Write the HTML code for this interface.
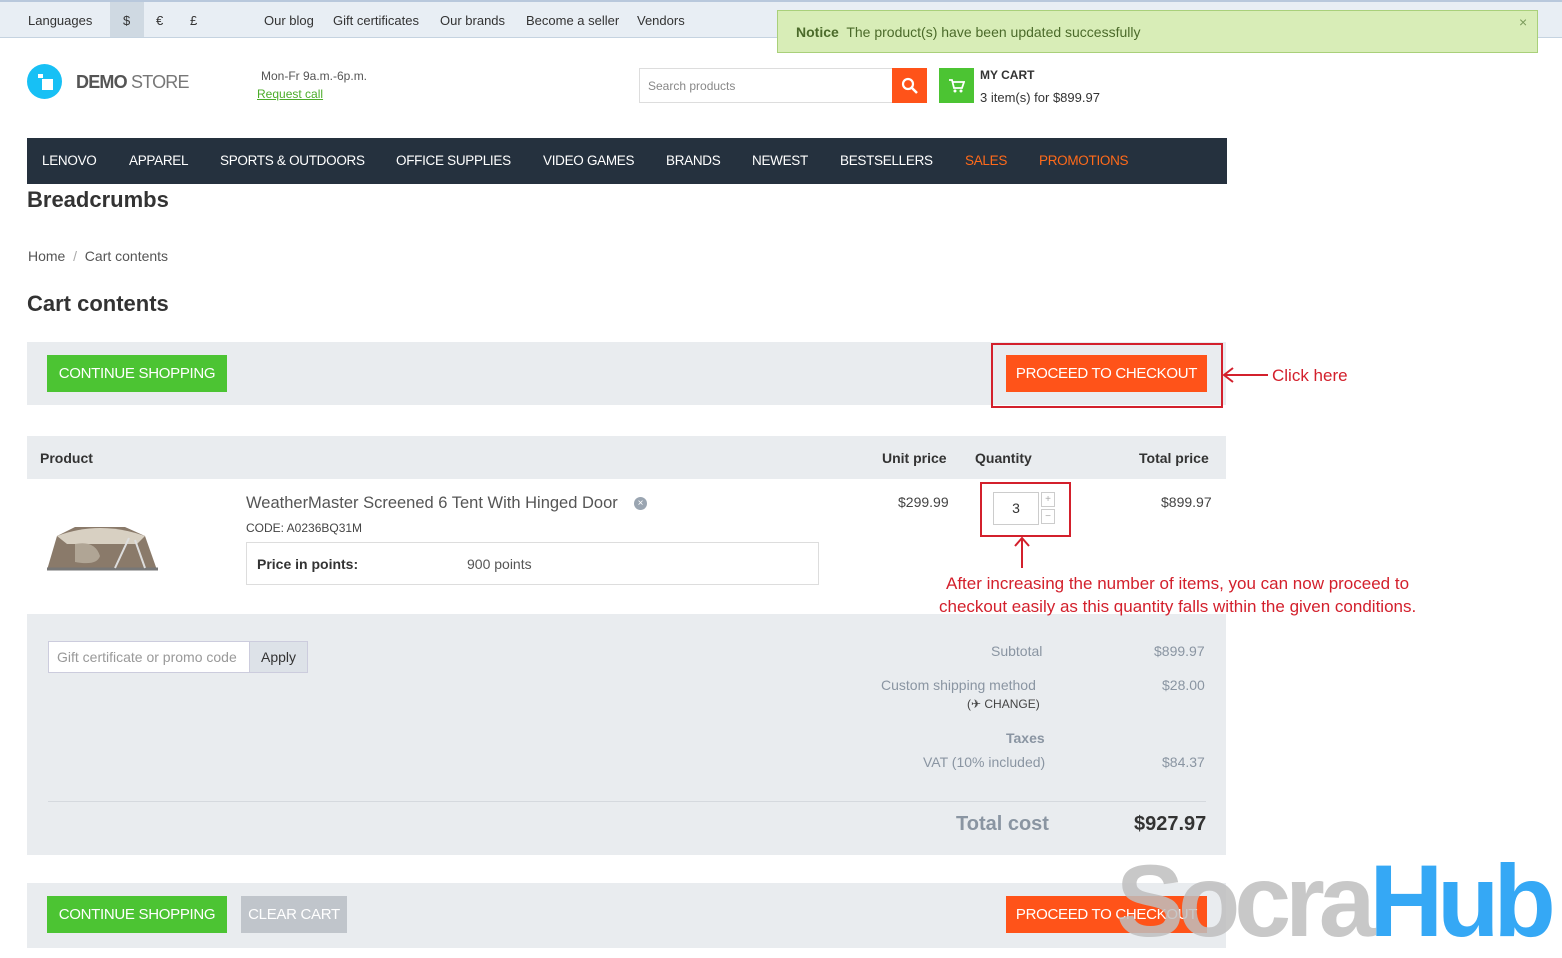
<!DOCTYPE html>
<html><head><meta charset="utf-8"><style>
*{margin:0;padding:0;box-sizing:border-box}
body{width:1562px;height:948px;position:relative;overflow:hidden;background:#fff;font-family:"Liberation Sans",sans-serif;color:#333}
.a{position:absolute;white-space:nowrap}
.top{left:0;top:0;width:1562px;height:38px;background:#e8eef4;border-top:2px solid #b8c8dc;border-bottom:1px solid #c5d3e0}
.t{font-size:13px;color:#333;top:13px}
.nav{left:27px;top:138px;width:1200px;height:46px;background:#25313e}
.nav span{position:absolute;top:15px;color:#fff;font-size:13.5px;letter-spacing:-0.3px}
.btn{position:absolute;color:#fff;font-size:15px;text-align:center;line-height:37px;height:37px;letter-spacing:-0.3px}
.g{background:#4cc433}.o{background:#ff5319}
.gray{color:#8a95a2}
</style></head><body>
<div class="a top"></div>
<div class="a" style="left:110px;top:2px;width:34px;height:35px;background:#cfd9e2"></div>
<div class="a t" style="left:28px">Languages</div>
<div class="a t" style="left:123px">$</div>
<div class="a t" style="left:156px">€</div>
<div class="a t" style="left:190px">£</div>
<div class="a t" style="left:264px">Our blog</div>
<div class="a t" style="left:333px">Gift certificates</div>
<div class="a t" style="left:440px">Our brands</div>
<div class="a t" style="left:526px">Become a seller</div>
<div class="a t" style="left:637px">Vendors</div>
<div class="a" style="left:777px;top:10px;width:761px;height:43px;background:#d8edb7;border:1px solid #a9d07a"></div>
<div class="a" style="left:796px;top:24px;font-size:14px;color:#4b6a2a"><b>Notice</b>&nbsp; The product(s) have been updated successfully</div>
<div class="a" style="left:1519px;top:14px;font-size:14px;color:#7a9a5a">×</div>

<div class="a" style="left:27px;top:64px;width:35px;height:35px;border-radius:50%;background:#17c0f5"></div>
<div class="a" style="left:38px;top:74px;width:5px;height:4px;background:#fff"></div>
<div class="a" style="left:42px;top:79px;width:11px;height:11px;background:#fff"></div>
<div class="a" style="left:76px;top:72px;font-size:18px;color:#555;letter-spacing:-0.8px"><b>DEMO</b> <span style="color:#777">STORE</span></div>
<div class="a" style="left:261px;top:69px;font-size:12px;color:#555">Mon-Fr 9a.m.-6p.m.</div>
<div class="a" style="left:257px;top:87px;font-size:12px;color:#4cac2a;text-decoration:underline">Request call</div>
<div class="a" style="left:639px;top:68px;width:254px;height:35px;border:1px solid #ddd"></div>
<div class="a" style="left:648px;top:79px;font-size:12px;color:#888">Search products</div>
<div class="a" style="left:892px;top:68px;width:35px;height:35px;background:#ff5319"></div>
<svg class="a" style="left:901px;top:77px" width="17" height="17"><circle cx="7" cy="7" r="5" stroke="#fff" stroke-width="2.2" fill="none"/><path d="M11 11l5 5" stroke="#fff" stroke-width="2.5"/></svg>
<div class="a" style="left:939px;top:68px;width:35px;height:35px;background:#4cc433"></div>
<svg class="a" style="left:948px;top:77px" width="17" height="17"><path d="M1 3h3l2 8h8l2-6H5" stroke="#fff" stroke-width="1.8" fill="none"/><circle cx="7" cy="14" r="1.5" fill="#fff"/><circle cx="13" cy="14" r="1.5" fill="#fff"/></svg>
<div class="a" style="left:980px;top:68px;font-size:12px;font-weight:bold;color:#333">MY CART</div>
<div class="a" style="left:980px;top:90px;font-size:13px;color:#333">3 item(s) for $899.97</div>

<div class="a nav">
<span style="left:15px">LENOVO</span><span style="left:102px">APPAREL</span><span style="left:193px">SPORTS &amp; OUTDOORS</span><span style="left:369px">OFFICE SUPPLIES</span><span style="left:516px">VIDEO GAMES</span><span style="left:639px">BRANDS</span><span style="left:725px">NEWEST</span><span style="left:813px">BESTSELLERS</span><span style="left:938px;color:#ff6a1a">SALES</span><span style="left:1012px;color:#ff6a1a">PROMOTIONS</span></div>

<div class="a" style="left:27px;top:187px;font-size:22px;font-weight:bold;color:#333">Breadcrumbs</div>
<div class="a" style="left:28px;top:248px;font-size:14px;color:#555">Home &nbsp;<span style="color:#aaa">/</span>&nbsp; Cart contents</div>
<div class="a" style="left:27px;top:291px;font-size:22px;font-weight:bold;color:#333">Cart contents</div>

<div class="a" style="left:27px;top:342px;width:1199px;height:63px;background:#e9ecef"></div>
<div class="btn g" style="left:47px;top:355px;width:180px">CONTINUE SHOPPING</div>
<div class="btn o" style="left:1006px;top:355px;width:201px">PROCEED TO CHECKOUT</div>
<div class="a" style="left:991px;top:343px;width:232px;height:65px;border:2px solid #d3202c"></div>
<svg class="a" style="left:1222px;top:366px" width="48" height="18"><path d="M2 9H46M11 2L2 9l9 7" stroke="#d3202c" stroke-width="2" fill="none"/></svg>
<div class="a" style="left:1272px;top:366px;font-size:17px;color:#d3202c">Click here</div>

<div class="a" style="left:27px;top:436px;width:1199px;height:43px;background:#e9ecef"></div>
<div class="a" style="left:40px;top:450px;font-size:14px;font-weight:bold">Product</div>
<div class="a" style="left:882px;top:450px;font-size:14px;font-weight:bold">Unit price</div>
<div class="a" style="left:975px;top:450px;font-size:14px;font-weight:bold">Quantity</div>
<div class="a" style="left:1139px;top:450px;font-size:14px;font-weight:bold">Total price</div>

<svg class="a" style="left:45px;top:522px" width="115" height="50"><path d="M12 14L30 5h50l20 9 12 34H2z" fill="#8a7a6a"/><path d="M12 14Q55 -2 100 14L92 22H22z" fill="#d8d0c2"/><path d="M30 22q20 -4 25 12q-3 10 -25 6z" fill="#b0a595"/><path d="M2 47h111" stroke="#777" stroke-width="3"/><path d="M84 16l-14 30M90 18l10 28" stroke="#ddd" stroke-width="2"/></svg>
<div class="a" style="left:246px;top:494px;font-size:16.5px;color:#555">WeatherMaster Screened 6 Tent With Hinged Door</div>
<div class="a" style="left:634px;top:497px;width:13px;height:13px;border-radius:50%;background:#9aa5b1;color:#fff;font-size:10px;line-height:13px;text-align:center">×</div>
<div class="a" style="left:246px;top:521px;font-size:12px;color:#444">CODE: A0236BQ31M</div>
<div class="a" style="left:246px;top:542px;width:573px;height:43px;border:1px solid #ddd"></div>
<div class="a" style="left:257px;top:556px;font-size:14px;font-weight:bold">Price in points:</div>
<div class="a" style="left:467px;top:556px;font-size:14px;color:#555">900 points</div>
<div class="a" style="left:898px;top:494px;font-size:14px;color:#444">$299.99</div>
<div class="a" style="left:1161px;top:494px;font-size:14px;color:#444">$899.97</div>
<div class="a" style="left:993px;top:492px;width:46px;height:33px;border:1px solid #ccc;font-size:14px;text-align:center;line-height:31px">3</div>
<div class="a" style="left:1041px;top:492px;width:14px;height:15px;border:1px solid #ccc;font-size:10px;color:#aaa;text-align:center;line-height:13px">+</div>
<div class="a" style="left:1041px;top:509px;width:14px;height:15px;border:1px solid #ccc;font-size:10px;color:#aaa;text-align:center;line-height:13px">−</div>
<div class="a" style="left:980px;top:482px;width:91px;height:55px;border:2px solid #d3202c"></div>
<svg class="a" style="left:1012px;top:535px" width="20" height="34"><path d="M10 33V3M3 11l7-8 7 8" stroke="#d3202c" stroke-width="2" fill="none"/></svg>
<div class="a" style="left:946px;top:574px;font-size:17px;color:#d3202c">After increasing the number of items, you can now proceed to</div>
<div class="a" style="left:939px;top:597px;font-size:17px;color:#d3202c">checkout easily as this quantity falls within the given conditions.</div>

<div class="a" style="left:27px;top:614px;width:1199px;height:241px;background:#e9ecef;z-index:-1"></div>
<div class="a" style="left:48px;top:641px;width:202px;height:32px;border:1px solid #ccd;background:#fff"></div>
<div class="a" style="left:57px;top:649px;font-size:14px;color:#999">Gift certificate or promo code</div>
<div class="a" style="left:249px;top:641px;width:59px;height:32px;border:1px solid #ccd;background:#dde2e8;font-size:14px;text-align:center;line-height:30px">Apply</div>
<div class="a gray" style="left:991px;top:643px;font-size:14px">Subtotal</div>
<div class="a gray" style="left:1154px;top:643px;font-size:14px">$899.97</div>
<div class="a gray" style="left:881px;top:677px;font-size:14px">Custom shipping method</div>
<div class="a gray" style="left:1162px;top:677px;font-size:14px">$28.00</div>
<div class="a" style="left:967px;top:697px;font-size:12px;color:#444">(✈ CHANGE)</div>
<div class="a gray" style="left:1006px;top:730px;font-size:14px;font-weight:bold">Taxes</div>
<div class="a gray" style="left:923px;top:754px;font-size:14px">VAT (10% included)</div>
<div class="a gray" style="left:1162px;top:754px;font-size:14px">$84.37</div>
<div class="a" style="left:48px;top:801px;width:1158px;height:1px;background:#d5d9de"></div>
<div class="a gray" style="left:956px;top:813px;font-size:20px;font-weight:bold">Total cost</div>
<div class="a" style="left:1134px;top:813px;font-size:20px;font-weight:bold;color:#333">$927.97</div>

<div class="a" style="left:27px;top:883px;width:1199px;height:65px;background:#e9ecef"></div>
<div class="btn g" style="left:47px;top:896px;width:180px">CONTINUE SHOPPING</div>
<div class="btn" style="left:241px;top:896px;width:106px;background:#c0c5cb">CLEAR CART</div>
<div class="btn o" style="left:1006px;top:896px;width:201px">PROCEED TO CHECKOUT</div>
<div class="a" style="left:1116px;top:850px;font-size:102px;font-weight:bold;letter-spacing:-6px;line-height:1"><span style="color:rgba(190,190,190,0.85)">Socra</span><span style="color:#35a8f5">Hub</span></div>
</body></html>
